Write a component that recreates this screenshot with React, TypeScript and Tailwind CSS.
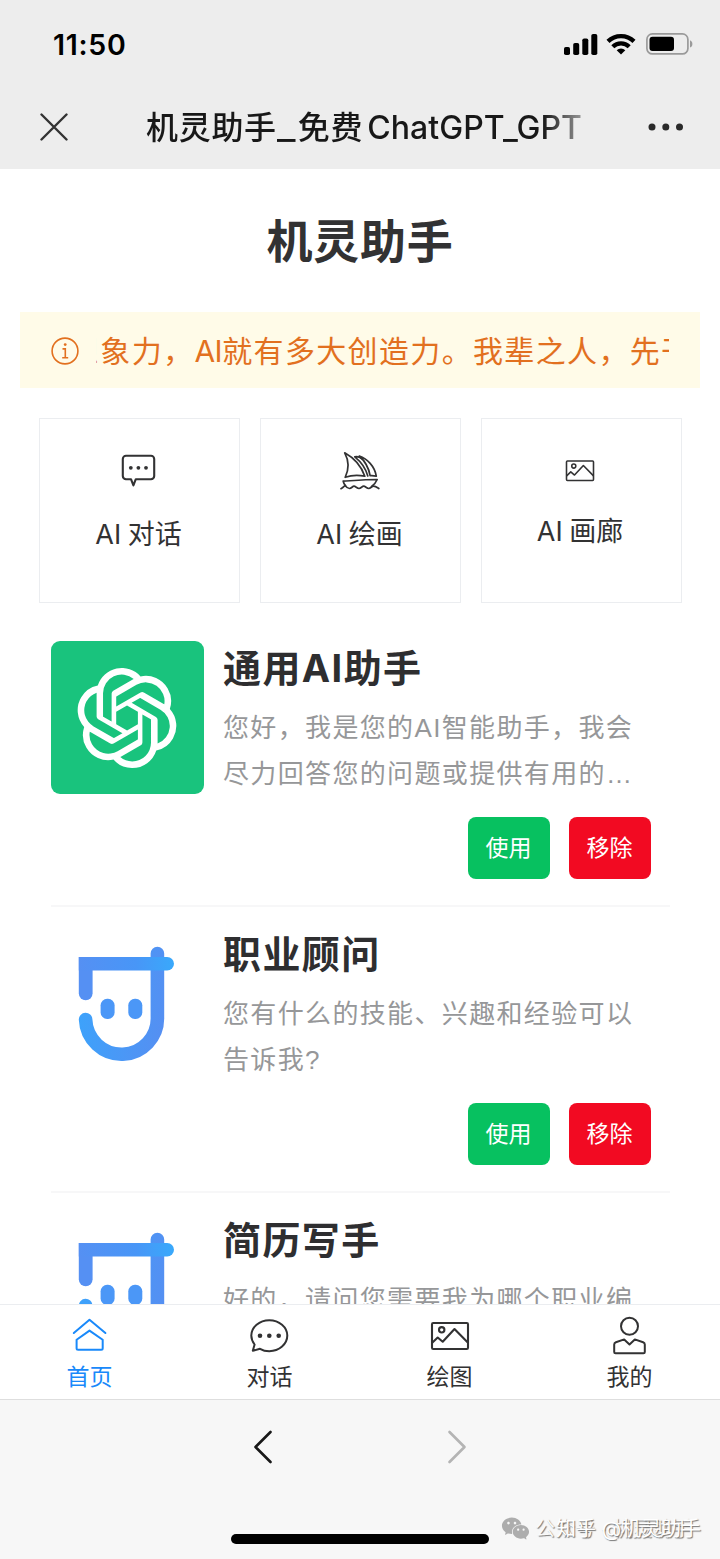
import React, { useState } from 'react';
import { SiOpenai } from 'react-icons/si';
import { AiFillWechat } from 'react-icons/ai';

interface Assistant {
  id: number;
  title: string;
  description: string;
  avatar: 'openai' | 'robot';
}

interface IconProps {
  className?: string;
}

const assistants: Assistant[] = [
  {
    id: 1,
    title: '通用AI助手',
    description: '您好，我是您的AI智能助手，我会尽力回答您的问题或提供有用的建议和信息。',
    avatar: 'openai',
  },
  {
    id: 2,
    title: '职业顾问',
    description: '您有什么的技能、兴趣和经验可以告诉我?',
    avatar: 'robot',
  },
  {
    id: 3,
    title: '简历写手',
    description: '好的，请问您需要我为哪个职业编写简历？',
    avatar: 'robot',
  },
];

function HomeIcon({ className }: IconProps) {
  return (
    <svg viewBox="0 0 40 40" className={className} fill="none" stroke="currentColor" strokeWidth="2" strokeLinecap="round" strokeLinejoin="round">
      <path d="M3.8 18 19.5 4.8 35.4 18" />
      <path d="M6.6 24.8 19.5 15.6l13.2 9.2v8.4a1.5 1.5 0 0 1-1.5 1.5H8.1a1.5 1.5 0 0 1-1.5-1.5z" />
    </svg>
  );
}

function BubbleIcon({ className }: IconProps) {
  return (
    <svg viewBox="0 0 40 40" className={className} fill="none" stroke="currentColor" strokeWidth="2" strokeLinejoin="round">
      <path d="M4.6 29.5C2.6 27 1.3 24 1.3 20.6 1.3 12.1 9.4 5.2 19.3 5.2s18 6.9 18 15.4-8 15.6-18 15.6c-3.4 0-6.6-.8-9.3-2.4L2.8 35.8z" />
      <g fill="currentColor" stroke="none">
        <circle cx="10" cy="20.7" r="2.3" />
        <circle cx="19.3" cy="20.7" r="2.3" />
        <circle cx="28.7" cy="20.7" r="2.3" />
      </g>
    </svg>
  );
}

function PictureIcon({ className }: IconProps) {
  return (
    <svg viewBox="0 0 40 40" className={className} fill="none" stroke="currentColor" strokeWidth="2.1" strokeLinejoin="round">
      <rect x="2" y="8" width="36" height="26" rx="1.2" />
      <circle cx="11.7" cy="14.8" r="2.7" />
      <path d="M2.2 27.8l5.5-5.3 5 4.2L24.5 14 38 27.8" />
    </svg>
  );
}

function UserIcon({ className }: IconProps) {
  return (
    <svg viewBox="0 0 40 40" className={className} fill="none" stroke="currentColor" strokeWidth="2" strokeLinejoin="round">
      <circle cx="19.5" cy="11.3" r="8.5" />
      <path d="M4.2 29.5c0-1.2.6-1.9 1.7-2.3l8.3-2.8 5.3 5 5.3-5 8.3 2.8c1.1.4 1.7 1.1 1.7 2.3V37a1.3 1.3 0 0 1-1.3 1.3h-28A1.3 1.3 0 0 1 4.2 37z" />
    </svg>
  );
}

function SquareChatIcon({ className }: IconProps) {
  return (
    <svg viewBox="0 0 40 40" className={className} fill="none" stroke="currentColor" strokeWidth="2.1" strokeLinejoin="round">
      <path d="M7 5.8h25a3.2 3.2 0 0 1 3.2 3.2v17a3.2 3.2 0 0 1-3.2 3.2H16.8l-2.4 6.2-2.4-6.2H7A3.2 3.2 0 0 1 3.8 26V9A3.2 3.2 0 0 1 7 5.8z" />
      <g fill="currentColor" stroke="none">
        <circle cx="11.8" cy="17.8" r="1.9" />
        <circle cx="19.4" cy="17.8" r="1.9" />
        <circle cx="27" cy="17.8" r="1.9" />
      </g>
    </svg>
  );
}

function SailIcon({ className }: IconProps) {
  return (
    <svg viewBox="0 0 40 40" className={className} fill="none" stroke="currentColor" strokeWidth="1.7" strokeLinecap="round" strokeLinejoin="round">
      <path d="M4.7 2.8C9.2 11 9 19.2 5.2 27.3c6.2-2.2 13-2.5 19.6-1.1C21.3 16.2 13.5 7.7 4.7 2.8z" />
      <path d="M14.8 6.8c6.2 5 11 11.5 13 19.2M14.8 6.8c2.5-.6 5 .2 7.2 2" />
      <path d="M19.3 6c7.8 2.5 15.5 10.5 17 20.2-2-.6-4-.8-6.2-.6C28.8 18 24.8 11 19.3 6z" />
      <path d="M3.2 31.2c11.3-.7 22.5-1.6 34-1.7-1.2 2.8-3.2 5.2-5.6 7M3.2 31.2c.4 1.8 1.2 3.3 2.4 4.6" />
      <path d="M1 38.7c1.6-.8 2.7-2 4-3.2 1.3 1.6 2.7 3 4.5 3 2 0 2.9-2.3 4.5-2.3s3 2.3 5 2.3 3-2.3 4.7-2.3 3 2.3 5 2.3 3-2.4 4.8-2.4 3.2 1 5.3 2.4" />
    </svg>
  );
}

function RobotAvatar() {
  return (
    <svg viewBox="0.4 0 153 153" className="size-[153px]" fill="none" strokeWidth="13.6" strokeLinecap="round">
      <defs>
        <linearGradient id="bar" gradientUnits="userSpaceOnUse" x1="28" y1="0" x2="124" y2="0">
          <stop offset="0" stopColor="#5590f3" />
          <stop offset="0.6" stopColor="#4896f7" />
          <stop offset="1" stopColor="#39a9fb" />
        </linearGradient>
        <linearGradient id="bowl" gradientUnits="userSpaceOnUse" x1="28" y1="90" x2="114" y2="100">
          <stop offset="0" stopColor="#3da2fb" />
          <stop offset="1" stopColor="#558ff2" />
        </linearGradient>
      </defs>
      <path d="M106.8 26.5V90a35.9 35.9 0 0 1-71.8 2.6" stroke="url(#bowl)" />
      <path d="M28.2 30H42v36.3a6.9 6.9 0 0 1-13.8 0z" fill="#5590f3" />
      <path d="M28.2 30h88.4a6.8 6.8 0 0 1 0 13.6H28.2z" fill="url(#bar)" />
      <rect x="50" y="71.7" width="14" height="20.3" rx="6.6" fill="#4b97f7" />
      <rect x="77.7" y="71.7" width="14" height="20.3" rx="6.6" fill="#4b97f7" />
    </svg>
  );
}

function StatusBar() {
  return (
    <div className="flex h-[88px] items-center justify-between pl-[53px] pr-[27px]">
      <span className="pt-[2px] font-[Inter] text-[28.5px] font-semibold leading-none tracking-[0.7px] text-black">11:50</span>
      <div className="flex items-center">
        <svg viewBox="0 0 34 21" className="h-[21px] w-[34px]">
          <rect x="0" y="13" width="6" height="8" rx="1.8" />
          <rect x="9.2" y="9" width="6" height="12" rx="1.8" />
          <rect x="18.3" y="4.5" width="6" height="16.5" rx="1.8" />
          <rect x="27.3" y="0" width="6" height="21" rx="1.8" />
        </svg>
        <svg viewBox="0 0 30 22" className="ml-[8px] h-[22px] w-[30px]" fill="none" stroke="#000" strokeWidth="4.3">
          <path d="M2 8.4a18.6 18.6 0 0 1 26 0" />
          <path d="M6.8 13.7a11.8 11.8 0 0 1 16.4 0" />
          <path d="M15 21.4l-4.3-4.1a6.2 6.2 0 0 1 8.6 0z" fill="#000" stroke="none" />
        </svg>
        <svg viewBox="0 0 47 22" className="ml-[10px] h-[22px] w-[47px]">
          <rect x="0.9" y="0.9" width="41" height="20" rx="5.5" fill="none" stroke="#9a9a9a" strokeWidth="1.7" />
          <rect x="3.5" y="3.7" width="24.5" height="14.4" rx="3" />
          <path d="M44 7.2c3.2 1.3 3.2 6.1 0 7.4z" fill="#9a9a9a" />
        </svg>
      </div>
    </div>
  );
}

function TitleBar() {
  return (
    <div className="flex h-[81px] items-center px-[40px] pb-[3px] text-[#181818]">
      <svg viewBox="0 0 28 28" className="size-[28px]" stroke="#333" strokeWidth="2.4" strokeLinecap="round">
        <path d="M1.5 1.5l25 25M26.5 1.5l-25 25" />
      </svg>
      <div className="ml-[78px] w-[436px] overflow-hidden whitespace-nowrap pt-[2px] text-[32px] font-medium tracking-[0.7px] [mask-image:linear-gradient(to_right,#000_91%,transparent_106%)]">
        机灵助手<span className="inline-block w-[21px] origin-left scale-x-[1.25]">_</span>免费
        <span className="ml-[4px] tracking-[0.05px]">ChatGPT_GPT</span>
      </div>
      <svg viewBox="0 0 36 8" className="ml-auto mr-[-4px] h-[8px] w-[36px]" fill="#2a2a2a">
        <circle cx="4" cy="4" r="3.5" />
        <circle cx="17.8" cy="4" r="3.5" />
        <circle cx="31.5" cy="4" r="3.5" />
      </svg>
    </div>
  );
}

function NoticeBar() {
  return (
    <div className="mx-[20px] flex h-[76px] items-center bg-[#fffbe8] px-[31px] text-[#e2701f]">
      <svg viewBox="0 0 28 28" className="mt-[1px] size-[28px] shrink-0" fill="none" stroke="currentColor" strokeWidth="1.6">
        <circle cx="14" cy="14" r="12.9" />
        <circle cx="14.2" cy="7.6" r="1.4" fill="currentColor" stroke="none" />
        <path d="M11.5 11.9h2.8v8.7M11.2 20.8h6" />
      </svg>
      <div className="ml-[17px] w-[574px] overflow-hidden whitespace-nowrap pt-[3px] text-[30px] tracking-[1.35px]">
        <span className="ml-[-27.5px] mr-[0.5px]">想</span>象力，<span className="tracking-[-0.5px]">AI</span>就有多大创造力。我辈之人，先干为敬
      </div>
    </div>
  );
}

function EntryGrid() {
  return (
    <div className="mt-[30px] grid grid-cols-3 gap-[20px] pl-[39px] pr-[38px] text-[27px] text-[#323233] [word-spacing:-1px]">
      <div className="flex h-[185px] flex-col items-center border border-[#ebedf0] pr-[2px] pt-[31px]">
        <SquareChatIcon className="size-[40px]" />
        <span className="mt-[26px] leading-[38px]">AI 对话</span>
      </div>
      <div className="flex h-[185px] flex-col items-center border border-[#ebedf0] pr-[2px] pt-[31px]">
        <SailIcon className="size-[40px]" />
        <span className="mt-[26px] leading-[38px]">AI 绘画</span>
      </div>
      <div className="flex h-[185px] flex-col items-center border border-[#ebedf0] pr-[3px] pt-[36px]">
        <PictureIcon className="size-[30px]" />
        <span className="mt-[28px] leading-[38px]">AI 画廊</span>
      </div>
    </div>
  );
}

function AssistantItem({ item, onRemove }: { item: Assistant; onRemove: (id: number) => void }) {
  return (
    <div className="flex h-[286px] border-b-2 border-[#f7f7f8] pt-[20px]">
      <div className="size-[153px] shrink-0">
        {item.avatar === 'openai' ? (
          <div className="flex size-[153px] items-center justify-center rounded-[9px] bg-[#19c37d] pr-[1px]">
            <SiOpenai className="size-[100px] text-white" />
          </div>
        ) : (
          <RobotAvatar />
        )}
      </div>
      <div className="ml-[19px] flex-1 pr-[19px]">
        <h2 className="text-[38px] font-bold leading-[54px] tracking-[1.4px] text-[#2e2e30]">{item.title}</h2>
        <p className="mt-[10px] line-clamp-2 h-[92px] w-[420px] font-['Liberation_Sans','Noto_Sans_CJK_SC',sans-serif] text-[26px] leading-[46px] tracking-[1.35px] text-[#969799]">
          {item.description}
        </p>
        <div className="mt-[20px] flex justify-end gap-[19px] text-[23px] text-white">
          <button className="h-[62px] w-[82px] rounded-[8px] bg-[#07c160] pr-[1px]">使用</button>
          <button className="h-[62px] w-[82px] rounded-[8px] bg-[#f20a22] pr-[1px]" onClick={() => onRemove(item.id)}>
            移除
          </button>
        </div>
      </div>
    </div>
  );
}

const tabs = [
  { name: '首页', icon: HomeIcon },
  { name: '对话', icon: BubbleIcon },
  { name: '绘图', icon: PictureIcon },
  { name: '我的', icon: UserIcon },
];

export default function App() {
  const [items, setItems] = useState<Assistant[]>(assistants);
  const [active, setActive] = useState(0);

  const handleRemove = (id: number) => {
    setItems(items.filter((item) => item.id !== id));
  };

  return (
    <div className="flex h-[1559px] w-[720px] flex-col overflow-hidden bg-white font-[Inter,'Noto_Sans_CJK_SC',sans-serif]">
      <header className="shrink-0 bg-[#ededed]">
        <StatusBar />
        <TitleBar />
      </header>

      <main className="h-[1135px] shrink-0 overflow-hidden">
        <h1 className="flex h-[143px] items-center justify-center pt-[2px] text-[46px] font-bold tracking-[0.8px] text-[#323233]">机灵助手</h1>
        <NoticeBar />
        <EntryGrid />
        <div className="ml-[51px] mt-[18px] w-[619px]">
          {items.map((item) => (
            <AssistantItem key={item.id} item={item} onRemove={handleRemove} />
          ))}
        </div>
      </main>

      <nav className="grid h-[95px] shrink-0 grid-cols-4 border-t border-[#ebedf0]">
        {tabs.map((tab, index) => (
          <button
            key={tab.name}
            onClick={() => setActive(index)}
            className={`flex flex-col items-center pt-[10px] ${active === index ? 'text-[#1989fa]' : 'text-[#323233]'}`}
          >
            <tab.icon className="size-[40px]" />
            <span className="mt-[5px] pr-[1px] text-[23px] leading-[34px]">{tab.name}</span>
          </button>
        ))}
      </nav>

      <footer className="relative flex flex-1 flex-col items-center justify-between border-t border-[#dedede] bg-[#f7f7f7] pb-[15px] pt-[30px]">
        <div className="flex w-[214px] justify-between">
          <svg viewBox="0 0 20 34" className="h-[34px] w-[20px]" fill="none" stroke="#181818" strokeWidth="2.6" strokeLinecap="round" strokeLinejoin="round">
            <path d="M17.5 2L2.5 17l15 15" />
          </svg>
          <svg viewBox="0 0 20 34" className="h-[34px] w-[20px]" fill="none" stroke="#b4b4b4" strokeWidth="2.6" strokeLinecap="round" strokeLinejoin="round">
            <path d="M2.5 2l15 15-15 15" />
          </svg>
        </div>
        <div className="h-[10px] w-[258px] rounded-full bg-black" />

        {/* watermarks, one printed over the other */}
        <div className="absolute bottom-[15px] right-[19px] flex items-center text-[20px] leading-[28px]">
          <AiFillWechat className="mr-[4px] size-[31px] text-[#adadad]" />
          <div className="relative h-[28px] w-[166px] whitespace-nowrap">
            <span className="absolute left-0 top-0 text-[#fafafa] [text-shadow:1px_1px_1px_#777]">公众号 · 机灵助手</span>
            <span className="absolute right-0 top-0 text-white [text-shadow:1px_1px_1px_#777]">知乎 @机灵助手</span>
          </div>
        </div>
      </footer>
    </div>
  );
}
